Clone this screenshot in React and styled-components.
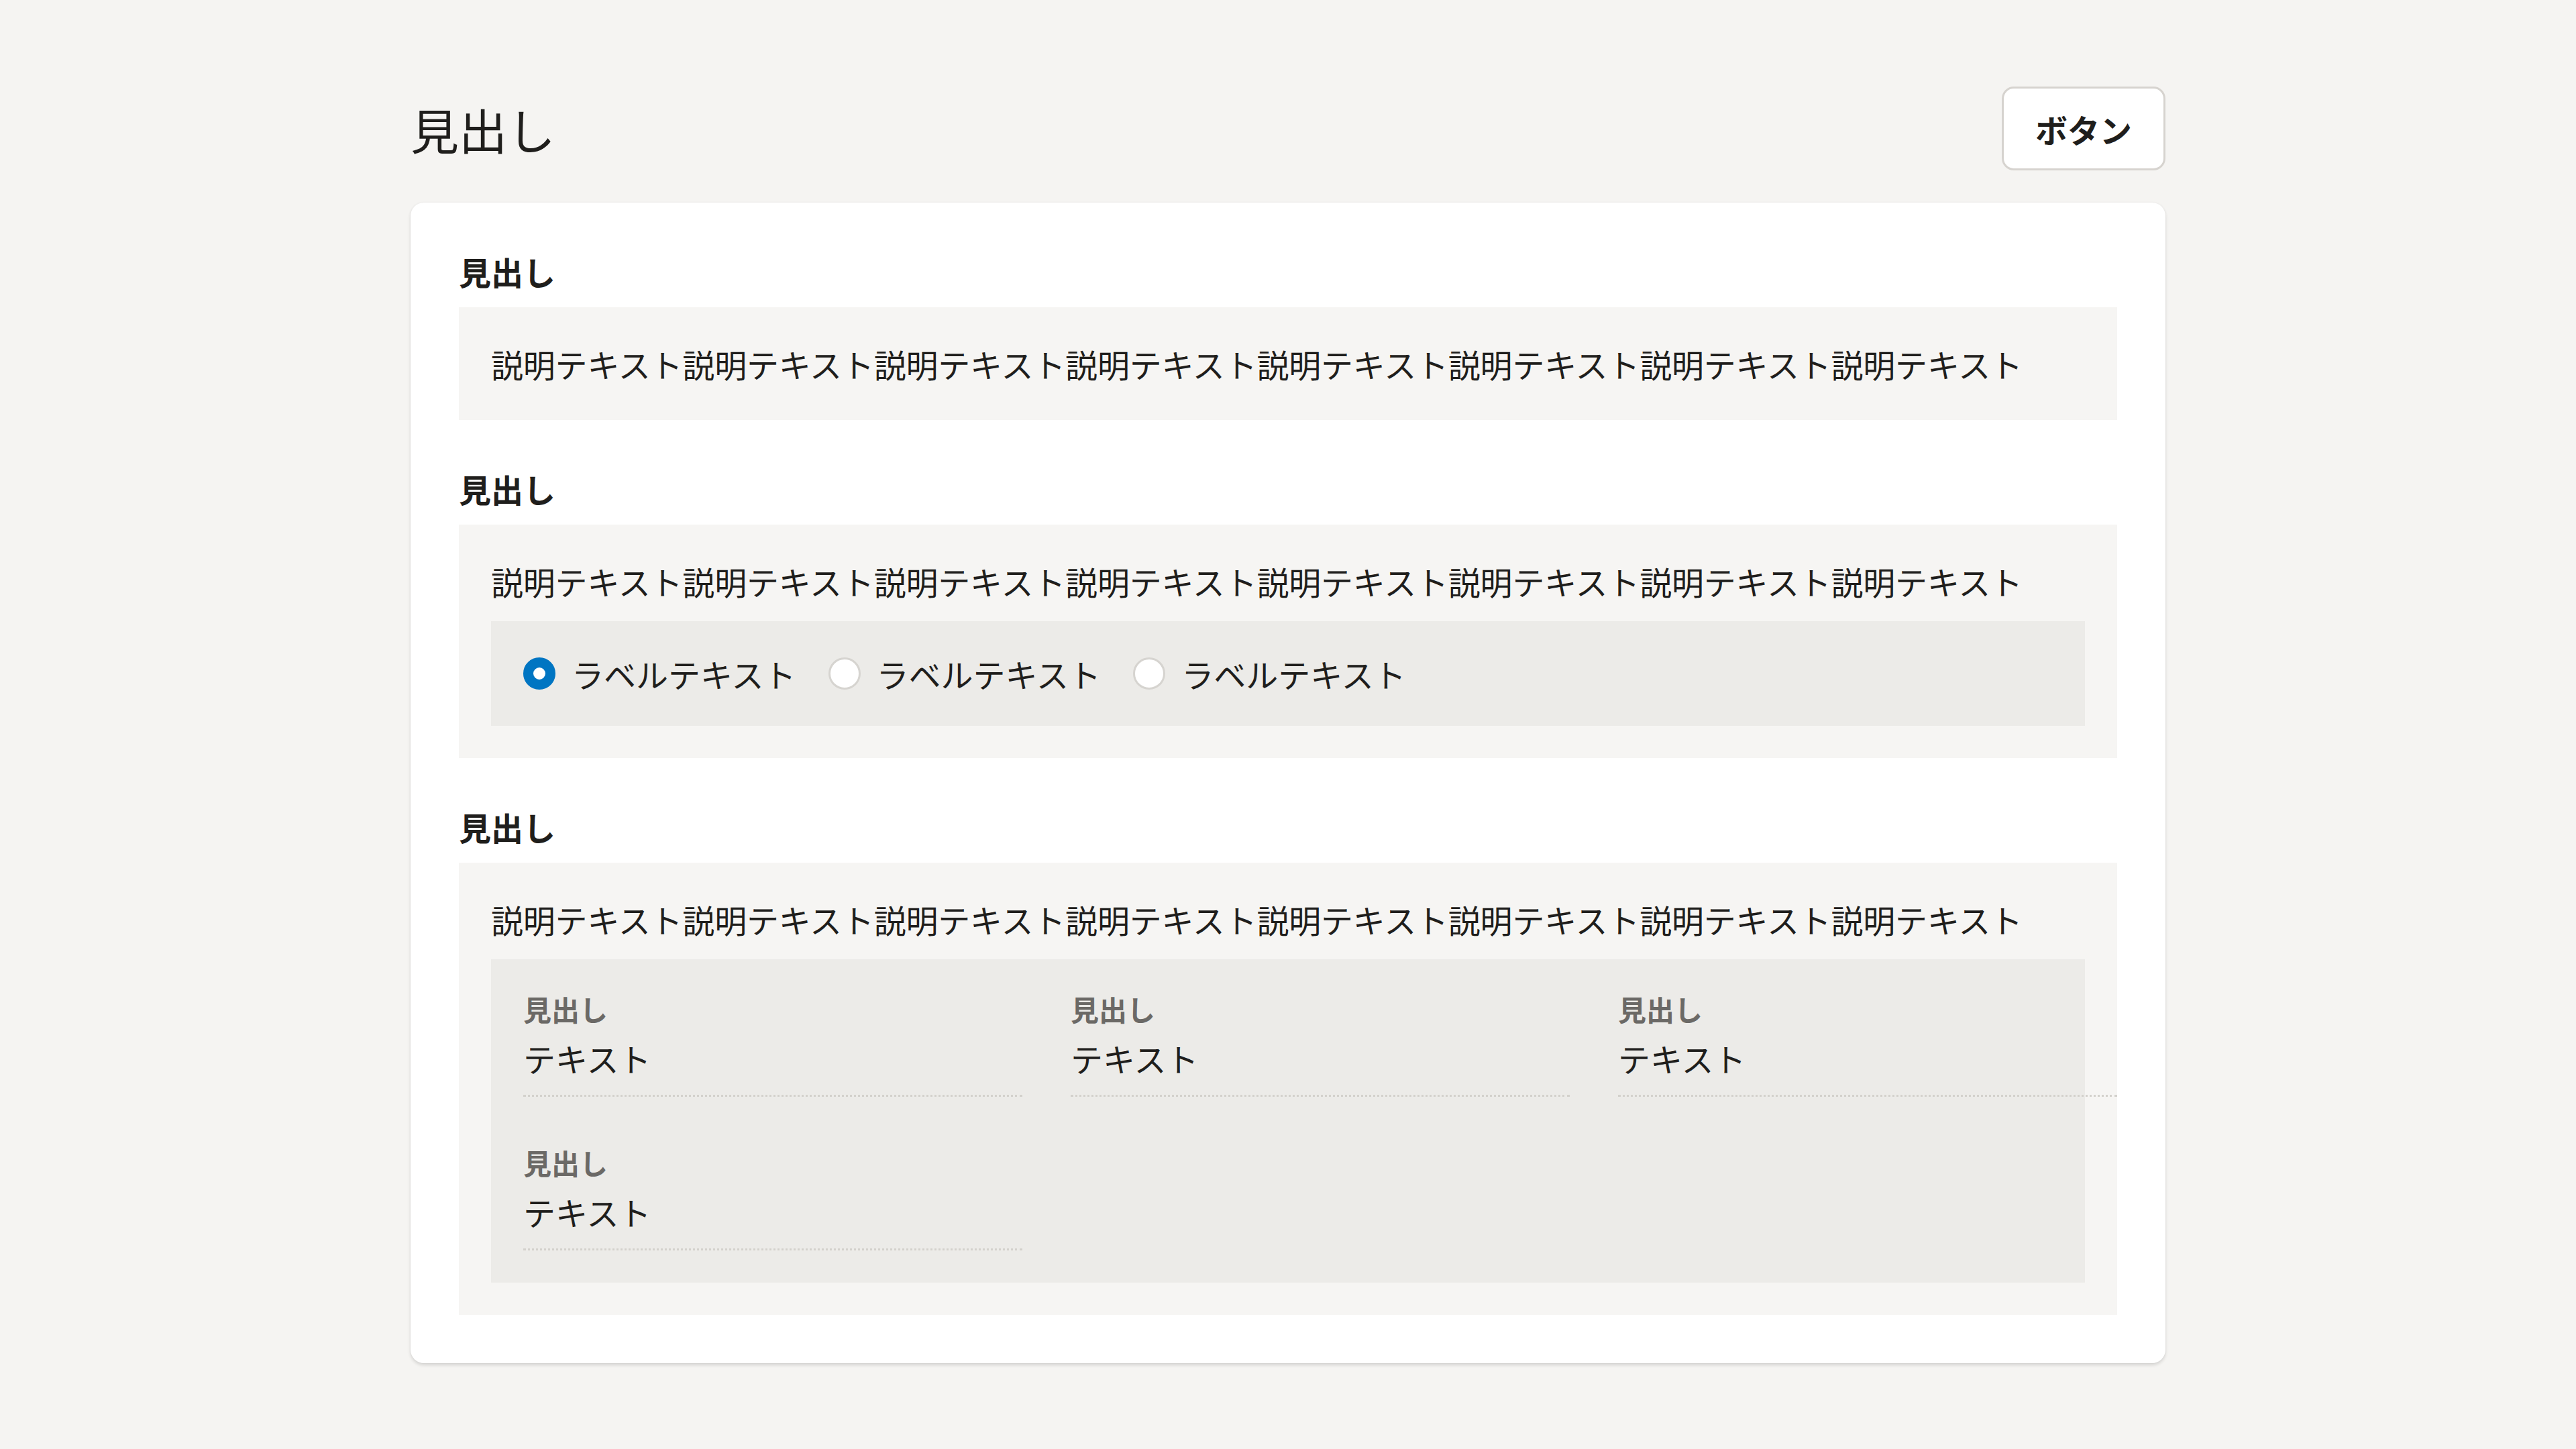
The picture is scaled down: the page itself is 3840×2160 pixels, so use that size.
import React, { useState } from 'react';
import styled, { createGlobalStyle } from 'styled-components';

// 3840x2160 at DPR 1: every design value is written at 3x
const GlobalStyle = createGlobalStyle`
  html,
  body {
    margin: 0;
    padding: 0;
  }
  body {
    background-color: #f5f4f2;
    color: #1f1e1c;
    font-family: 'Noto Sans CJK JP', 'Noto Sans', sans-serif;
  }
  * {
    box-sizing: border-box;
  }
`;

const Page = styled.div`
  width: 2616px;
  margin: 0 auto;
  padding: 129px 0 129px;
`;

const Header = styled.header`
  display: flex;
  justify-content: space-between;
  align-items: center;
  margin-bottom: 48px;
`;

const PageTitle = styled.h1`
  margin: 0;
  font-size: 72px;
  font-weight: 400;
  line-height: 104px;
`;

const Button = styled.button`
  height: 125px;
  padding: 0 47px;
  background-color: #fff;
  border: 3px solid #d6d3cf;
  border-radius: 18px;
  font-family: inherit;
  font-size: 48px;
  font-weight: 700;
  color: #1f1e1c;
  cursor: pointer;
`;

const Card = styled.main`
  display: flex;
  flex-direction: column;
  gap: 72px;
  padding: 72px;
  background-color: #fff;
  border-radius: 20px;
  box-shadow: 0 3px 5px rgba(0, 0, 0, 0.13), 0 0 3px rgba(0, 0, 0, 0.05);
`;

const Section = styled.section``;

const SectionTitle = styled.h2`
  margin: 0 0 24px;
  font-size: 48px;
  font-weight: 700;
  line-height: 60px;
`;

const Panel = styled.div`
  display: flex;
  flex-direction: column;
  gap: 24px;
  padding: 48px;
  background-color: #f6f5f3;
`;

const Description = styled.p`
  margin: 0;
  font-size: 48px;
  line-height: 72px;
  letter-spacing: -0.2px;
`;

const InnerPanel = styled.div`
  padding: 48px;
  background-color: #ecebe8;
`;

// ラジオボタン
const RadioGroup = styled.div`
  display: flex;
  gap: 48px;
`;

const RadioItem = styled.label`
  display: flex;
  align-items: center;
  gap: 24px;
  cursor: pointer;
`;

const RadioMark = styled.input.attrs({ type: 'radio' })`
  appearance: none;
  margin: 0;
  width: 48px;
  height: 48px;
  border-radius: 50%;
  background-color: #fff;
  border: ${({ checked }) => (checked ? '15px solid #0075c2' : '3px solid #d6d4d0')};
  cursor: pointer;
`;

const RadioLabel = styled.span`
  font-size: 48px;
  line-height: 60px;
`;

// 項目リスト (3列目ははみ出す)
const DetailGrid = styled.dl`
  display: grid;
  grid-template-columns: repeat(3, 744px);
  column-gap: 72px;
  row-gap: 72px;
  margin: 0;
`;

const DetailItem = styled.div`
  display: flex;
  flex-direction: column;
  gap: 12px;
  padding-bottom: 19px;
  border-bottom: 3px dotted #d3d1cc;
`;

const DetailLabel = styled.dt`
  font-size: 42px;
  font-weight: 700;
  line-height: 51px;
  color: #6b6966;
`;

const DetailValue = styled.dd`
  margin: 0;
  font-size: 48px;
  line-height: 72px;
`;

const description = '説明テキスト'.repeat(8);
const radios = ['ラベルテキスト', 'ラベルテキスト', 'ラベルテキスト'];
const details = [
  { label: '見出し', value: 'テキスト' },
  { label: '見出し', value: 'テキスト' },
  { label: '見出し', value: 'テキスト' },
  { label: '見出し', value: 'テキスト' },
];

function App() {
  const [selected, setSelected] = useState(0);

  return (
    <>
      <GlobalStyle />
      <Page>
        <Header>
          <PageTitle>見出し</PageTitle>
          <Button type="button">ボタン</Button>
        </Header>

        <Card>
          <Section>
            <SectionTitle>見出し</SectionTitle>
            <Panel>
              <Description>{description}</Description>
            </Panel>
          </Section>

          <Section>
            <SectionTitle>見出し</SectionTitle>
            <Panel>
              <Description>{description}</Description>
              <InnerPanel>
                <RadioGroup>
                  {radios.map((label, idx) => (
                    <RadioItem key={idx}>
                      <RadioMark
                        name="sample"
                        checked={selected === idx}
                        onChange={() => setSelected(idx)}
                      />
                      <RadioLabel>{label}</RadioLabel>
                    </RadioItem>
                  ))}
                </RadioGroup>
              </InnerPanel>
            </Panel>
          </Section>

          <Section>
            <SectionTitle>見出し</SectionTitle>
            <Panel>
              <Description>{description}</Description>
              <InnerPanel>
                <DetailGrid>
                  {details.map((item, idx) => (
                    <DetailItem key={idx}>
                      <DetailLabel>{item.label}</DetailLabel>
                      <DetailValue>{item.value}</DetailValue>
                    </DetailItem>
                  ))}
                </DetailGrid>
              </InnerPanel>
            </Panel>
          </Section>
        </Card>
      </Page>
    </>
  );
}

export default App;
